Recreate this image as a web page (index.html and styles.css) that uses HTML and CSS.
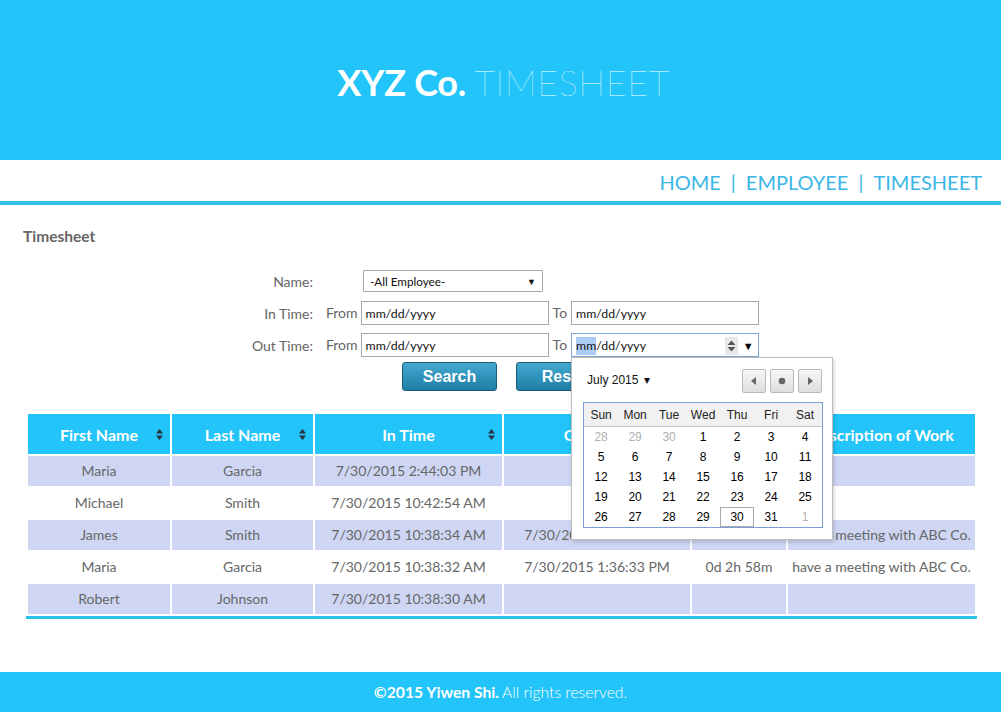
FILE: index.html
```html
<!DOCTYPE html>
<html>
<head>
<meta charset="utf-8">
<title>XYZ Co. Timesheet</title>
<link rel="stylesheet" href="styles.css">
</head>
<body>
<header class="site-header">
  <h1 class="brand"><b>XYZ Co.</b> <span class="brand-light">TIMESHEET</span></h1>
</header>
<nav class="site-nav">
  <a href="#">HOME</a><span class="sep">|</span><a href="#">EMPLOYEE</a><span class="sep">|</span><a href="#">TIMESHEET</a>
</nav>

<main class="content">
  <h2 class="page-title">Timesheet</h2>

  <form class="search-form">
    <label class="lbl">Name:</label>
    <div class="field">
      <div class="select"><span>-All Employee-</span><span class="sel-arrow">&#9660;</span></div>
    </div>

    <label class="lbl">In Time:</label>
    <div class="field">
      <span class="word">From</span>
      <div class="date-input">mm/dd/yyyy</div>
      <span class="word to">To</span>
      <div class="date-input">mm/dd/yyyy</div>
    </div>

    <label class="lbl">Out Time:</label>
    <div class="field">
      <span class="word">From</span>
      <div class="date-input">mm/dd/yyyy</div>
      <span class="word to">To</span>
      <div class="date-wrap">
        <div class="date-input focused"><span class="hl">mm</span>/dd/yyyy
          <span class="spin"><svg width="9" height="12" viewBox="0 0 9 12"><path d="M4.5 0.5 L8.5 5 H0.5 Z M4.5 11.5 L8.5 7 H0.5 Z" fill="#555"/></svg></span>
          <span class="dd-arrow">&#9660;</span>
        </div>
        <div class="picker">
          <div class="picker-head">
            <span class="month">July 2015 <span class="caret">&#9662;</span></span>
            <div class="pnav">
              <span class="pbtn"><svg width="6" height="8" viewBox="0 0 6 8"><path d="M5 0 V8 L0 4 Z" fill="#666"/></svg></span>
              <span class="pbtn"><svg width="8" height="8" viewBox="0 0 8 8"><circle cx="4" cy="4" r="3.3" fill="#666"/></svg></span>
              <span class="pbtn"><svg width="6" height="8" viewBox="0 0 6 8"><path d="M1 0 V8 L6 4 Z" fill="#666"/></svg></span>
            </div>
          </div>
          <div class="cal">
            <div class="cal-head"><span>Sun</span><span>Mon</span><span>Tue</span><span>Wed</span><span>Thu</span><span>Fri</span><span>Sat</span></div>
            <div class="cal-body">
              <span class="other">28</span><span class="other">29</span><span class="other">30</span><span>1</span><span>2</span><span>3</span><span>4</span>
              <span>5</span><span>6</span><span>7</span><span>8</span><span>9</span><span>10</span><span>11</span>
              <span>12</span><span>13</span><span>14</span><span>15</span><span>16</span><span>17</span><span>18</span>
              <span>19</span><span>20</span><span>21</span><span>22</span><span>23</span><span>24</span><span>25</span>
              <span>26</span><span>27</span><span>28</span><span>29</span><span class="today">30</span><span>31</span><span class="other">1</span>
            </div>
          </div>
        </div>
      </div>
    </div>

    <div class="buttons">
      <button type="button" class="btn">Search</button>
      <button type="button" class="btn">Reset</button>
    </div>
  </form>

  <table class="grid">
    <colgroup>
      <col style="width:142px"><col style="width:141px"><col style="width:187px"><col style="width:186px"><col style="width:94px"><col style="width:187px">
    </colgroup>
    <thead>
      <tr>
        <th><div class="th-in">First Name<svg class="sort" width="7" height="11" viewBox="0 0 7 11"><path d="M3.5 0 L7 4.5 H0 Z M3.5 11 L7 6.5 H0 Z" fill="#2a3340"/></svg></div></th>
        <th><div class="th-in">Last Name<svg class="sort" width="7" height="11" viewBox="0 0 7 11"><path d="M3.5 0 L7 4.5 H0 Z M3.5 11 L7 6.5 H0 Z" fill="#2a3340"/></svg></div></th>
        <th><div class="th-in">In Time<svg class="sort" width="7" height="11" viewBox="0 0 7 11"><path d="M3.5 0 L7 4.5 H0 Z M3.5 11 L7 6.5 H0 Z" fill="#2a3340"/></svg></div></th>
        <th><div class="th-in">Out Time<svg class="sort" width="7" height="11" viewBox="0 0 7 11"><path d="M3.5 0 L7 4.5 H0 Z M3.5 11 L7 6.5 H0 Z" fill="#2a3340"/></svg></div></th>
        <th><div class="th-in">Hours</div></th>
        <th><div class="th-in">Description of Work</div></th>
      </tr>
    </thead>
    <tbody>
      <tr class="alt"><td>Maria</td><td>Garcia</td><td>7/30/2015 2:44:03 PM</td><td></td><td></td><td></td></tr>
      <tr><td>Michael</td><td>Smith</td><td>7/30/2015 10:42:54 AM</td><td></td><td></td><td></td></tr>
      <tr class="alt"><td>James</td><td>Smith</td><td>7/30/2015 10:38:34 AM</td><td>7/30/2015 1:38:40 PM</td><td>0d 3h 0m</td><td>have a meeting with ABC Co.</td></tr>
      <tr><td>Maria</td><td>Garcia</td><td>7/30/2015 10:38:32 AM</td><td>7/30/2015 1:36:33 PM</td><td>0d 2h 58m</td><td>have a meeting with ABC Co.</td></tr>
      <tr class="alt"><td>Robert</td><td>Johnson</td><td>7/30/2015 10:38:30 AM</td><td></td><td></td><td></td></tr>
    </tbody>
  </table>
</main>

<footer class="site-footer">
  <b>&copy;2015 Yiwen Shi.</b> <span class="light">All rights reserved.</span>
</footer>
</body>
</html>
```

FILE: styles.css
```css
* { box-sizing: border-box; }
html, body { margin: 0; padding: 0; }
body {
  font-family: Lato, "Open Sans", "Liberation Sans", sans-serif;
  color: #666;
  background: #fff;
  width: 1003px;
}

.site-header {
  height: 160px;
  background: #22c4fa;
  display: flex;
  align-items: center;
  justify-content: center;
  padding: 4px 0 0 6px;
  margin-right: 2px;
}
.brand {
  margin: 0;
  font-size: 36px;
  font-weight: 700;
  color: #fff;
  letter-spacing: -0.3px;
}
.brand b { font-weight: 700; }
.brand-light { font-weight: 100; letter-spacing: 0.5px; }

.site-nav {
  height: 45px;
  border-bottom: 4px solid #33c0ea;
  display: flex;
  justify-content: flex-end;
  align-items: center;
  padding: 2px 19px 0 0;
  font-size: 20px;
  margin-right: 2px;
}
.site-nav a {
  color: #3bb6e6;
  text-decoration: none;
}
.site-nav .sep {
  color: #3bb6e6;
  margin: 0 10px;
}

.content {
  padding: 0 26px;
}
.page-title {
  margin: 21px 0 0 -3px;
  font-size: 15.5px;
  line-height: 20px;
  font-weight: 700;
  color: #666;
}

.search-form {
  display: grid;
  grid-template-columns: 287px auto;
  column-gap: 13px;
  grid-auto-rows: 32px;
  margin-top: 19px;
  font-size: 14px;
}
.lbl {
  text-align: right;
  align-self: center;
  color: #666;
}
.field {
  display: flex;
  align-items: center;
}
.word {
  color: #666;
  margin-right: 3px;
  position: relative;
  top: -1px;
}
.word.to { margin-left: 4px; margin-right: 4px; }
.select {
  margin-left: 37px;
  width: 180px;
  height: 22px;
  border: 1px solid #a9a9a9;
  border-radius: 1px;
  display: flex;
  align-items: center;
  justify-content: space-between;
  padding: 0 6px 0 6px;
  font-size: 11.7px;
  color: #111;
}
.sel-arrow { font-size: 9px; color: #111; }

.date-input {
  width: 188px;
  height: 24px;
  border: 1px solid #a9a9a9;
  padding: 3px 0 0 4px;
  font-size: 12.3px;
  color: #111;
  line-height: 18px;
  background: #fff;
}
.date-wrap { position: relative; }
.date-input.focused {
  border-color: #7aa7d6;
  display: flex;
  align-items: center;
  padding-top: 1px;
}
.hl { background: #accdf5; }
.spin {
  margin-left: auto;
  width: 13px;
  height: 18px;
  background: #e8e8e8;
  display: flex;
  align-items: center;
  justify-content: center;
}
.dd-arrow {
  width: 20px;
  text-align: center;
  font-size: 11px;
  color: #000;
}

.picker {
  position: absolute;
  left: 0;
  top: 24px;
  width: 262px;
  height: 183px;
  background: #fff;
  border: 1px solid #bdbdbd;
  box-shadow: 1px 2px 4px rgba(0,0,0,0.18);
  padding: 0 10px 0 11px;
  font-family: "Liberation Sans", Arial, sans-serif;
  z-index: 5;
}
.picker-head {
  height: 44px;
  display: flex;
  align-items: center;
  justify-content: space-between;
  padding-left: 4px;
}
.month { font-size: 12px; color: #111; }
.caret { font-size: 12px; margin-left: 2px; }
.pnav { display: flex; gap: 4px; margin-top: 1px; }
.pbtn {
  width: 24px;
  height: 24px;
  border: 1px solid #b9b9b9;
  border-radius: 2px;
  background: linear-gradient(#f7f7f7, #dedede);
  display: flex;
  align-items: center;
  justify-content: center;
}
.cal {
  width: 240px;
  border: 1px solid #7b9fd4;
}
.cal-head {
  display: grid;
  grid-template-columns: repeat(7, 34px);
  height: 24px;
  background: #f1f1f1;
  border-bottom: 1px solid #c8c8c8;
  font-size: 12px;
  color: #222;
}
.cal-head span, .cal-body span {
  display: flex;
  align-items: center;
  justify-content: center;
}
.cal-body {
  display: grid;
  grid-template-columns: repeat(7, 34px);
  grid-auto-rows: 20px;
  font-size: 12px;
  color: #000;
}
.cal-body .other { color: #b0b0b0; }
.cal-body .today { border: 1px solid #a9a9a9; }

.buttons {
  grid-column: 2;
  display: flex;
  gap: 19px;
  padding-left: 76px;
  margin-top: 1px;
  height: 30px;
}
.btn {
  width: 95px;
  height: 29px;
  border: 1px solid #1c5c7b;
  border-radius: 3px;
  background: linear-gradient(#44a9d0, #1f7ea6);
  color: #fff;
  font-family: "Liberation Sans", Arial, sans-serif;
  font-weight: 700;
  font-size: 16px;
  padding: 0;
}

.grid {
  margin-top: 19px;
  width: 951px;
  table-layout: fixed;
  border-collapse: separate;
  border-spacing: 2px;
  border-bottom: 3px solid #2ec0ec;
  font-size: 14px;
}
.grid th {
  height: 40px;
  background: #22c4fa;
  color: #fff;
  font-weight: 700;
  font-size: 16px;
  padding: 0;
}
.th-in {
  position: relative;
  text-align: center;
}
.sort {
  position: absolute;
  right: 7px;
  top: 4px;
}
.grid td {
  height: 30px;
  padding: 0 0 2px;
  text-align: center;
  color: #666;
  white-space: nowrap;
  overflow: hidden;
}
.grid tr.alt td { background: #cfd6f4; }

.site-footer {
  margin-top: 53px;
  height: 40px;
  background: #22c4fa;
  color: #fff;
  display: flex;
  align-items: center;
  justify-content: center;
  font-size: 15.7px;
  gap: 3px;
  margin-right: 2px;
}
.site-footer b { font-weight: 700; }
.site-footer .light { font-weight: 300; }
```
